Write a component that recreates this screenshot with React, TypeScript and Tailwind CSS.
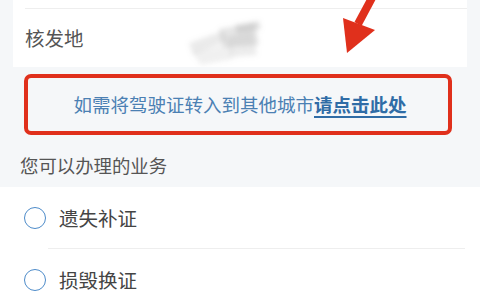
import React from "react";

const font = { fontFamily: '"Noto Sans CJK SC", "Noto Sans", sans-serif' };

function Radio() {
  return <div className="w-[22px] h-[22px] rounded-full border-[1.5px] border-[#4d8bc9] shrink-0" />;
}

export default function App() {
  return (
    <div className="relative w-[480px] h-[300px] overflow-hidden bg-[#f5f7f9]" style={font}>
      <div className="mx-[13px] bg-white">
        <div className="ml-[12px] h-[9px] border-b border-[#eeeeee]" />
        <div className="h-[58px] flex items-center pl-[12px] relative">
          <span className="text-[19.5px] text-[#555555] leading-none">核发地</span>
          <svg className="absolute left-[166px] top-[2px]" width="100" height="56" viewBox="0 0 100 56">
            <defs>
              <filter id="b" x="-20%" y="-20%" width="140%" height="140%">
                <feGaussianBlur stdDeviation="2.6" />
              </filter>
            </defs>
            <g filter="url(#b)" fill="#a0a0a0">
              <path d="M10 32 L44 20 L48 30 L14 44 Z" opacity="0.22" />
              <path d="M40 18 L76 12 L80 34 L44 36 Z" opacity="0.28" />
              <path d="M14 42 L52 32 L54 48 L22 54 Z" opacity="0.16" />
              <path d="M48 26 L74 20 L78 44 L52 46 Z" opacity="0.2" />
              <path d="M56 14 L80 10 L82 18 L58 22 Z" opacity="0.3" />
            </g>
          </svg>
        </div>
      </div>
      <div className="mt-[7px] ml-[24px] w-[428px] h-[61px] border-[4px] border-[#e0301c] rounded-[7px] flex items-center justify-center">
        <span className="text-[18.5px] leading-none text-[#4b80b3] pl-[4px]">
          如需将驾驶证转入到其他城市
          <span className="text-[#2f6ca6] font-semibold underline underline-offset-[4px] decoration-[1.5px]">请点击此处</span>
        </span>
      </div>
      <div className="h-[52px] pt-[8px] flex items-center pl-[20px]">
        <span className="text-[18.4px] leading-none text-[#555555]">您可以办理的业务</span>
      </div>
      <div className="bg-white">
        <div className="h-[61px] flex items-center pl-[24px] gap-[13px]">
          <Radio />
          <span className="text-[19.5px] leading-none text-[#444444]">遗失补证</span>
        </div>
        <div className="ml-[48px] mr-[15px] border-t border-[#eeeeee]" />
        <div className="h-[61px] flex items-center pl-[24px] gap-[13px]">
          <Radio />
          <span className="text-[19.5px] leading-none text-[#444444]">损毁换证</span>
        </div>
      </div>
      <svg className="absolute left-0 top-0" width="480" height="80" viewBox="0 0 480 80">
        <line x1="373" y1="-4" x2="358" y2="24" stroke="#e0301c" strokeWidth="8" />
        <polygon points="343,18 375,30 347,53" fill="#e0301c" />
      </svg>
    </div>
  );
}
